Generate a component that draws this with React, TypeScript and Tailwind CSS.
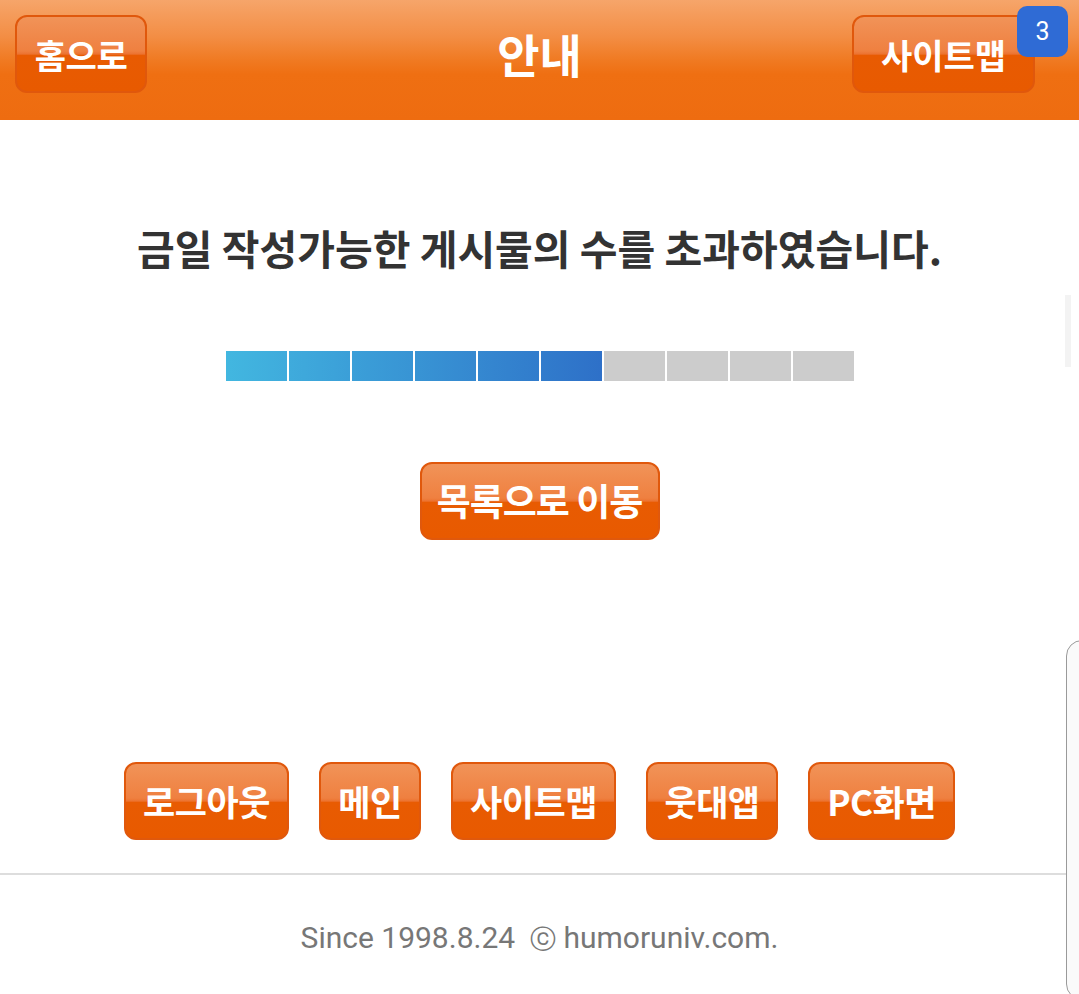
import React from "react";

const kr = "font-['Noto_Sans_CJK_KR','Noto_Sans',sans-serif]";

const btn =
  "flex shrink-0 items-center justify-center rounded-[12px] border-2 border-[#e0580c] bg-[linear-gradient(to_bottom,#f19358_0%,#ef8040_46%,#ec7331_50%,#e85b02_52%,#e85a00_100%)] font-bold text-white";

const BLUE_FROM = [0x42, 0xb7, 0xe0];
const BLUE_TO = [0x2e, 0x70, 0xc8];

function mix(t: number) {
  const c = BLUE_FROM.map((v, i) => Math.round(v + (BLUE_TO[i] - v) * t));
  return `rgb(${c[0]},${c[1]},${c[2]})`;
}

function Progress({ filled, total }: { filled: number; total: number }) {
  return (
    <div className="flex h-[30px] w-[628px] gap-[2px]">
      {Array.from({ length: total }).map((_, i) =>
        i < filled ? (
          <div
            key={i}
            className="h-full flex-1"
            style={{ background: `linear-gradient(to right, ${mix(i / filled)}, ${mix((i + 1) / filled)})` }}
          />
        ) : (
          <div key={i} className="h-full flex-1 bg-[#cccccc]" />
        ),
      )}
    </div>
  );
}

const bottomLinks = [
  { label: "로그아웃", w: "w-[165px]" },
  { label: "메인", w: "w-[102px]" },
  { label: "사이트맵", w: "w-[165px]" },
  { label: "웃대앱", w: "w-[132px]" },
  { label: "PC화면", w: "w-[147px]" },
];

export default function App() {
  return (
    <div className={`relative min-h-[994px] w-full overflow-hidden bg-white ${kr}`}>
      <header className="grid h-[120px] grid-cols-[1fr_auto_1fr] items-start bg-[linear-gradient(to_bottom,#f6a56a_0%,#f38e45_30%,#f07a22_50%,#ef6f12_62%,#ee6c10_100%)] px-[15px] pt-[15px]">
        <button type="button" className={`${btn} h-[78px] w-[132px] justify-self-start text-[34px] tracking-[-0.5px]`}>
          홈으로
        </button>
        <h1 className="pt-[10px] text-[46px] font-bold leading-[56px] text-white">안내</h1>
        <div className="relative mr-[29px] justify-self-end">
          <button type="button" className={`${btn} h-[78px] w-[183px] text-[34px]`}>
            사이트맵
          </button>
          <span className="absolute right-[-33px] top-[-9px] flex h-[51px] w-[51px] items-center justify-center rounded-[10px] bg-[#2f6bd5] font-['Roboto',sans-serif] text-[25px] text-white">
            3
          </span>
        </div>
      </header>

      <main className="flex flex-col items-center">
        <p className="mt-[103px] text-[41px] font-bold leading-[48px] text-[#333333]">
          금일 작성가능한 게시물의 수를 초과하였습니다.
        </p>
        <div className="mt-[80px]">
          <Progress filled={6} total={10} />
        </div>
        <button type="button" className={`${btn} mt-[81px] h-[78px] w-[240px] text-[37px] tracking-[-1px]`}>
          목록으로 이동
        </button>

        <nav className="mt-[222px] flex gap-[30px]">
          {bottomLinks.map((l) => (
            <button key={l.label} type="button" className={`${btn} ${l.w} h-[78px] text-[35px] tracking-[-0.5px]`}>
              {l.label}
            </button>
          ))}
        </nav>
      </main>

      <footer className="mt-[33px] border-t-2 border-[#dddddd] pt-[45px] text-center">
        <p className="font-['Roboto','DejaVu_Sans',sans-serif] text-[30px] leading-[35px] text-[#777777]">
          Since 1998.8.24&nbsp; <span className="text-[26px]">ⓒ</span> humoruniv.com.
        </p>
      </footer>

      <div className="absolute left-[1065px] top-[295px] h-[72px] w-[6px] bg-[#f3f3f3]" />
      <div className="absolute left-[1066px] top-[640px] h-[360px] w-[30px] rounded-l-[16px] border border-[#9a9a9a] bg-[#fafafa]" />
    </div>
  );
}
